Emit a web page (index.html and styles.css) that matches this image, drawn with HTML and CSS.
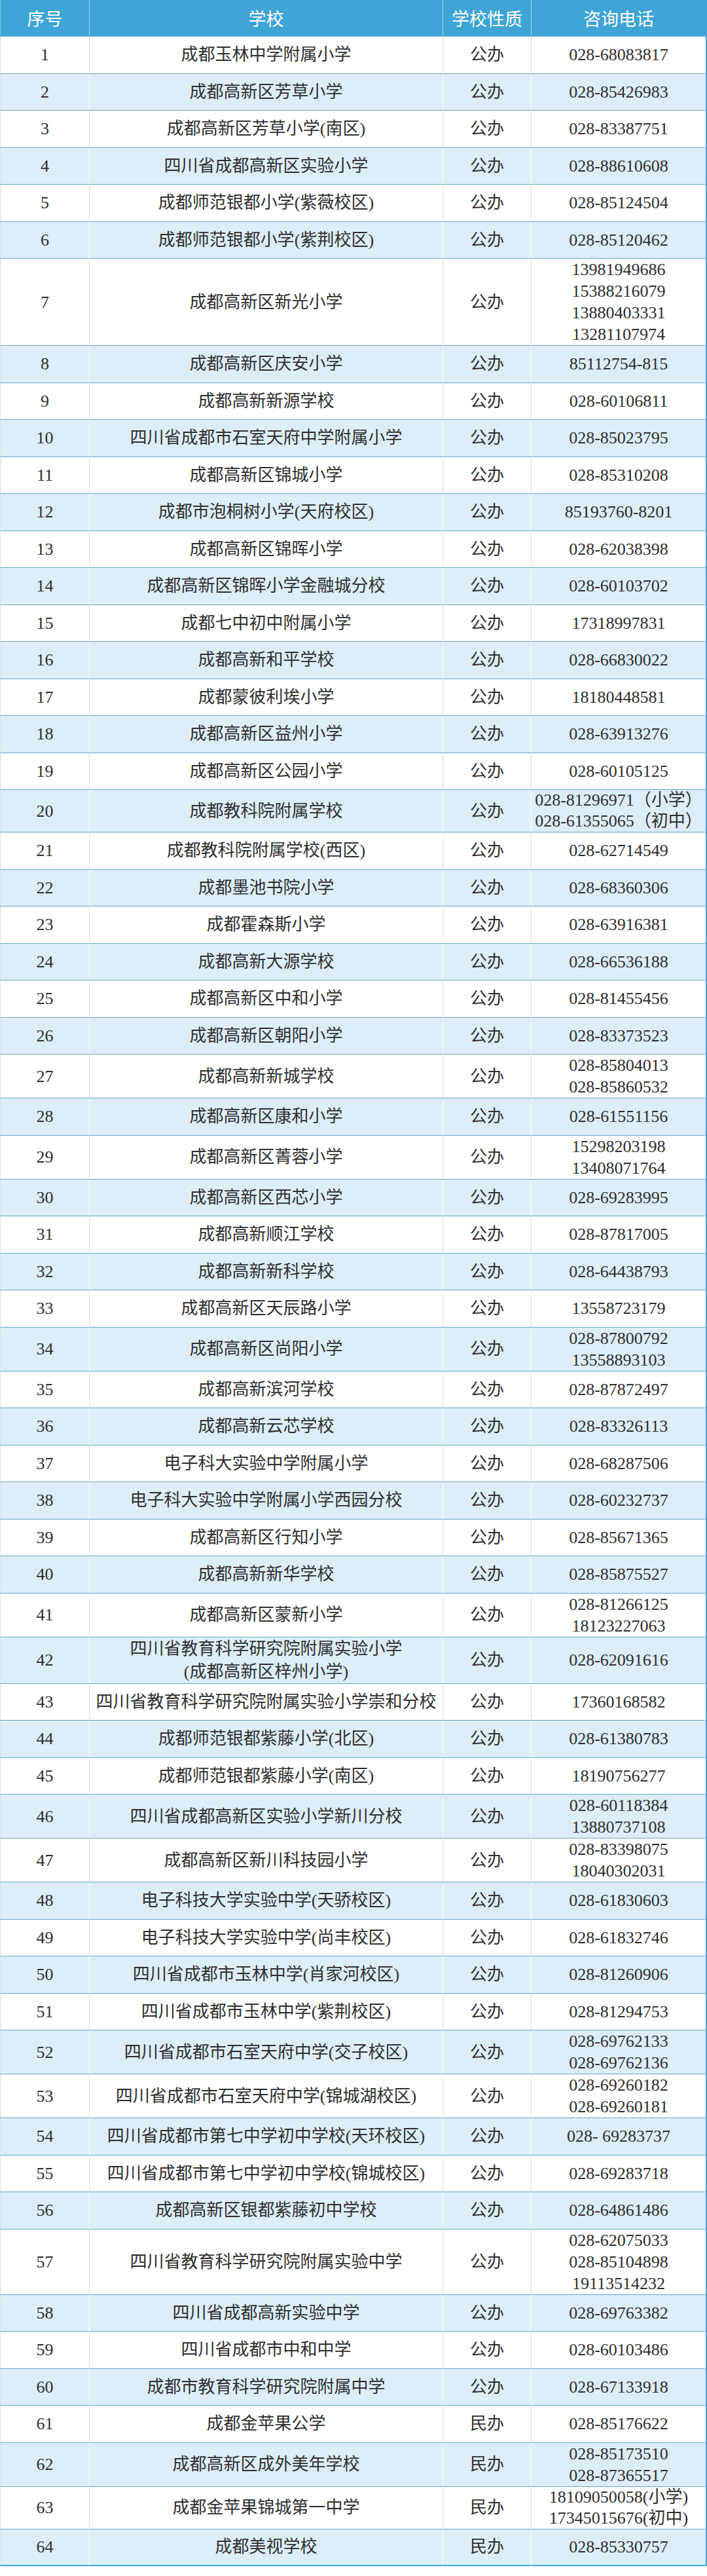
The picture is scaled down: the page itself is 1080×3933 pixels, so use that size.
FILE: index.html
```html
<!DOCTYPE html>
<html lang="zh-CN">
<head>
<meta charset="utf-8">
<title>学校咨询电话</title>
<link rel="stylesheet" href="styles.css">
</head>
<body>
<table class="schools">
  <colgroup>
    <col class="c-no">
    <col class="c-name">
    <col class="c-type">
    <col class="c-tel">
  </colgroup>
  <thead>
    <tr><th>序号</th><th>学校</th><th>学校性质</th><th>咨询电话</th></tr>
  </thead>
  <tbody>
    <tr><td>1</td><td>成都玉林中学附属小学</td><td>公办</td><td>028-68083817</td></tr>
    <tr><td>2</td><td>成都高新区芳草小学</td><td>公办</td><td>028-85426983</td></tr>
    <tr><td>3</td><td>成都高新区芳草小学(南区)</td><td>公办</td><td>028-83387751</td></tr>
    <tr><td>4</td><td>四川省成都高新区实验小学</td><td>公办</td><td>028-88610608</td></tr>
    <tr><td>5</td><td>成都师范银都小学(紫薇校区)</td><td>公办</td><td>028-85124504</td></tr>
    <tr><td>6</td><td>成都师范银都小学(紫荆校区)</td><td>公办</td><td>028-85120462</td></tr>
    <tr><td>7</td><td>成都高新区新光小学</td><td>公办</td><td>13981949686<br>15388216079<br>13880403331<br>13281107974</td></tr>
    <tr><td>8</td><td>成都高新区庆安小学</td><td>公办</td><td>85112754-815</td></tr>
    <tr><td>9</td><td>成都高新新源学校</td><td>公办</td><td>028-60106811</td></tr>
    <tr><td>10</td><td>四川省成都市石室天府中学附属小学</td><td>公办</td><td>028-85023795</td></tr>
    <tr><td>11</td><td>成都高新区锦城小学</td><td>公办</td><td>028-85310208</td></tr>
    <tr><td>12</td><td>成都市泡桐树小学(天府校区)</td><td>公办</td><td>85193760-8201</td></tr>
    <tr><td>13</td><td>成都高新区锦晖小学</td><td>公办</td><td>028-62038398</td></tr>
    <tr><td>14</td><td>成都高新区锦晖小学金融城分校</td><td>公办</td><td>028-60103702</td></tr>
    <tr><td>15</td><td>成都七中初中附属小学</td><td>公办</td><td>17318997831</td></tr>
    <tr><td>16</td><td>成都高新和平学校</td><td>公办</td><td>028-66830022</td></tr>
    <tr><td>17</td><td>成都蒙彼利埃小学</td><td>公办</td><td>18180448581</td></tr>
    <tr><td>18</td><td>成都高新区益州小学</td><td>公办</td><td>028-63913276</td></tr>
    <tr><td>19</td><td>成都高新区公园小学</td><td>公办</td><td>028-60105125</td></tr>
    <tr><td>20</td><td>成都教科院附属学校</td><td>公办</td><td class="tight">028-81296971（小学）<br>028-61355065（初中）</td></tr>
    <tr><td>21</td><td>成都教科院附属学校(西区)</td><td>公办</td><td>028-62714549</td></tr>
    <tr><td>22</td><td>成都墨池书院小学</td><td>公办</td><td>028-68360306</td></tr>
    <tr><td>23</td><td>成都霍森斯小学</td><td>公办</td><td>028-63916381</td></tr>
    <tr><td>24</td><td>成都高新大源学校</td><td>公办</td><td>028-66536188</td></tr>
    <tr><td>25</td><td>成都高新区中和小学</td><td>公办</td><td>028-81455456</td></tr>
    <tr><td>26</td><td>成都高新区朝阳小学</td><td>公办</td><td>028-83373523</td></tr>
    <tr><td>27</td><td>成都高新新城学校</td><td>公办</td><td>028-85804013<br>028-85860532</td></tr>
    <tr><td>28</td><td>成都高新区康和小学</td><td>公办</td><td>028-61551156</td></tr>
    <tr><td>29</td><td>成都高新区菁蓉小学</td><td>公办</td><td>15298203198<br>13408071764</td></tr>
    <tr><td>30</td><td>成都高新区西芯小学</td><td>公办</td><td>028-69283995</td></tr>
    <tr><td>31</td><td>成都高新顺江学校</td><td>公办</td><td>028-87817005</td></tr>
    <tr><td>32</td><td>成都高新新科学校</td><td>公办</td><td>028-64438793</td></tr>
    <tr><td>33</td><td>成都高新区天辰路小学</td><td>公办</td><td>13558723179</td></tr>
    <tr><td>34</td><td>成都高新区尚阳小学</td><td>公办</td><td>028-87800792<br>13558893103</td></tr>
    <tr><td>35</td><td>成都高新滨河学校</td><td>公办</td><td>028-87872497</td></tr>
    <tr><td>36</td><td>成都高新云芯学校</td><td>公办</td><td>028-83326113</td></tr>
    <tr><td>37</td><td>电子科大实验中学附属小学</td><td>公办</td><td>028-68287506</td></tr>
    <tr><td>38</td><td>电子科大实验中学附属小学西园分校</td><td>公办</td><td>028-60232737</td></tr>
    <tr><td>39</td><td>成都高新区行知小学</td><td>公办</td><td>028-85671365</td></tr>
    <tr><td>40</td><td>成都高新新华学校</td><td>公办</td><td>028-85875527</td></tr>
    <tr><td>41</td><td>成都高新区蒙新小学</td><td>公办</td><td>028-81266125<br>18123227063</td></tr>
    <tr><td>42</td><td class="loose">四川省教育科学研究院附属实验小学<br>(成都高新区梓州小学)</td><td>公办</td><td>028-62091616</td></tr>
    <tr><td>43</td><td>四川省教育科学研究院附属实验小学崇和分校</td><td>公办</td><td>17360168582</td></tr>
    <tr><td>44</td><td>成都师范银都紫藤小学(北区)</td><td>公办</td><td>028-61380783</td></tr>
    <tr><td>45</td><td>成都师范银都紫藤小学(南区)</td><td>公办</td><td>18190756277</td></tr>
    <tr><td>46</td><td>四川省成都高新区实验小学新川分校</td><td>公办</td><td>028-60118384<br>13880737108</td></tr>
    <tr><td>47</td><td>成都高新区新川科技园小学</td><td>公办</td><td>028-83398075<br>18040302031</td></tr>
    <tr><td>48</td><td>电子科技大学实验中学(天骄校区)</td><td>公办</td><td>028-61830603</td></tr>
    <tr><td>49</td><td>电子科技大学实验中学(尚丰校区)</td><td>公办</td><td>028-61832746</td></tr>
    <tr><td>50</td><td>四川省成都市玉林中学(肖家河校区)</td><td>公办</td><td>028-81260906</td></tr>
    <tr><td>51</td><td>四川省成都市玉林中学(紫荆校区)</td><td>公办</td><td>028-81294753</td></tr>
    <tr><td>52</td><td>四川省成都市石室天府中学(交子校区)</td><td>公办</td><td>028-69762133<br>028-69762136</td></tr>
    <tr><td>53</td><td>四川省成都市石室天府中学(锦城湖校区)</td><td>公办</td><td>028-69260182<br>028-69260181</td></tr>
    <tr><td>54</td><td>四川省成都市第七中学初中学校(天环校区)</td><td>公办</td><td>028- 69283737</td></tr>
    <tr><td>55</td><td>四川省成都市第七中学初中学校(锦城校区)</td><td>公办</td><td>028-69283718</td></tr>
    <tr><td>56</td><td>成都高新区银都紫藤初中学校</td><td>公办</td><td>028-64861486</td></tr>
    <tr><td>57</td><td>四川省教育科学研究院附属实验中学</td><td>公办</td><td>028-62075033<br>028-85104898<br>19113514232</td></tr>
    <tr><td>58</td><td>四川省成都高新实验中学</td><td>公办</td><td>028-69763382</td></tr>
    <tr><td>59</td><td>四川省成都市中和中学</td><td>公办</td><td>028-60103486</td></tr>
    <tr><td>60</td><td>成都市教育科学研究院附属中学</td><td>公办</td><td>028-67133918</td></tr>
    <tr><td>61</td><td>成都金苹果公学</td><td>民办</td><td>028-85176622</td></tr>
    <tr><td>62</td><td>成都高新区成外美年学校</td><td>民办</td><td>028-85173510<br>028-87365517</td></tr>
    <tr><td>63</td><td>成都金苹果锦城第一中学</td><td>民办</td><td class="tight">18109050058(小学)<br>17345015676(初中)</td></tr>
    <tr><td>64</td><td>成都美视学校</td><td>民办</td><td>028-85330757</td></tr>
  </tbody>
</table>
</body>
</html>
```

FILE: styles.css
```css
html, body {
  margin: 0;
  padding: 0;
  background: #ffffff;
}

.schools {
  width: 1080px;
  table-layout: fixed;
  border-collapse: separate;
  border-spacing: 0;
  font-family: "Liberation Serif", "Noto Sans CJK SC", serif;
  font-size: 26px;
  color: #2e2e2e;
}

.c-no { width: 136px; }
.c-name { width: 540px; }
.c-type { width: 135px; }
.c-tel { width: 269px; }

.schools thead tr {
  height: 56px;
}

.schools th {
  background: #3fa5d6;
  color: #ffffff;
  font-family: "Noto Sans CJK SC", sans-serif;
  font-weight: 400;
  font-size: 27px;
  line-height: 36px;
  padding: 0;
  text-align: center;
  vertical-align: middle;
  border-left: 1px solid #a9d4ec;
  border-bottom: 1px solid #67a9cf;
}

.schools th:first-child {
  border-left-color: #7fc0e3;
}

.schools th:last-child {
  border-right: 2px solid #3fa5d6;
}

.schools tbody tr {
  height: 56.5px;
  background: #ffffff;
}

.schools tbody tr:nth-child(even) {
  background: #ddeef8;
}

.schools td {
  padding: 0 2px;
  text-align: center;
  vertical-align: middle;
  line-height: 33px;
  font-weight: 400;
  border-left: 1px solid #dcdcdc;
  border-bottom: 1px solid #67a9cf;
  white-space: nowrap;
}

.schools tbody tr:nth-child(even) td {
  border-left-color: #ffffff;
}

.schools tbody tr td:first-child {
  border-left-color: #d6e2ea;
}

.schools td:last-child {
  border-right: 2px solid #42a4d5;
}

.schools tbody tr:last-child td {
  border-bottom: 2px solid #42a4d5;
}

.schools td.tight {
  line-height: 32px;
}

.schools td.loose {
  line-height: 35px;
}
```
